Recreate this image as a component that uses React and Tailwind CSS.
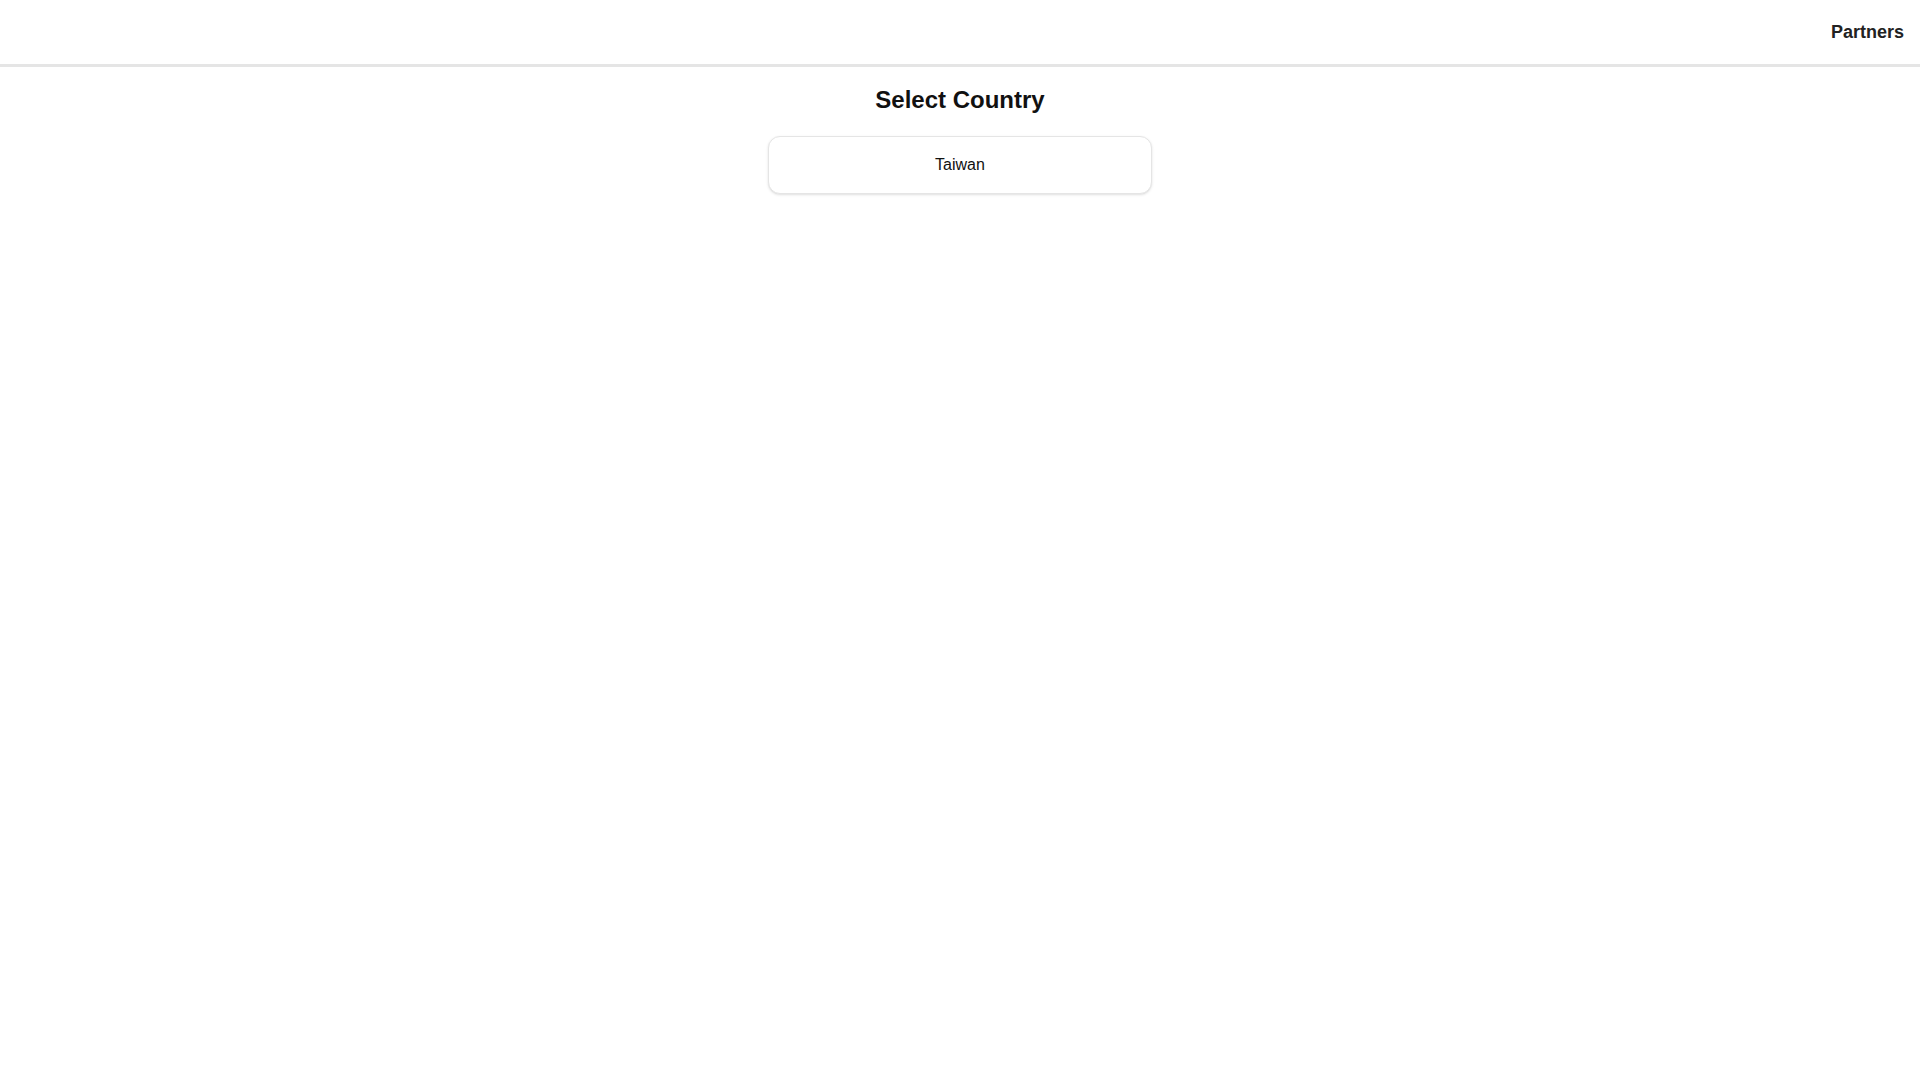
import React from 'react';

const countries = ['Taiwan'];

const App = () => {
  return (
    <div className="min-h-screen bg-white font-['Liberation_Sans',Arial,sans-serif]">
      <header className="h-[67px] flex items-center justify-end px-4 border-b-[3px] border-[#e5e5e5]">
        <span className="text-lg font-bold text-[#222]">Partners</span>
      </header>

      <main className="flex flex-col items-center">
        <h1 className="mt-[17px] mb-5 text-2xl font-bold text-[#111]">Select Country</h1>
        <div className="flex flex-col gap-3">
          {countries.map((name) => (
            <button
              key={name}
              className="w-96 p-4 rounded-xl border border-[#e5e5e5] bg-white shadow-sm text-base text-[#111] text-center"
            >
              {name}
            </button>
          ))}
        </div>
      </main>
    </div>
  );
};

export default App;
